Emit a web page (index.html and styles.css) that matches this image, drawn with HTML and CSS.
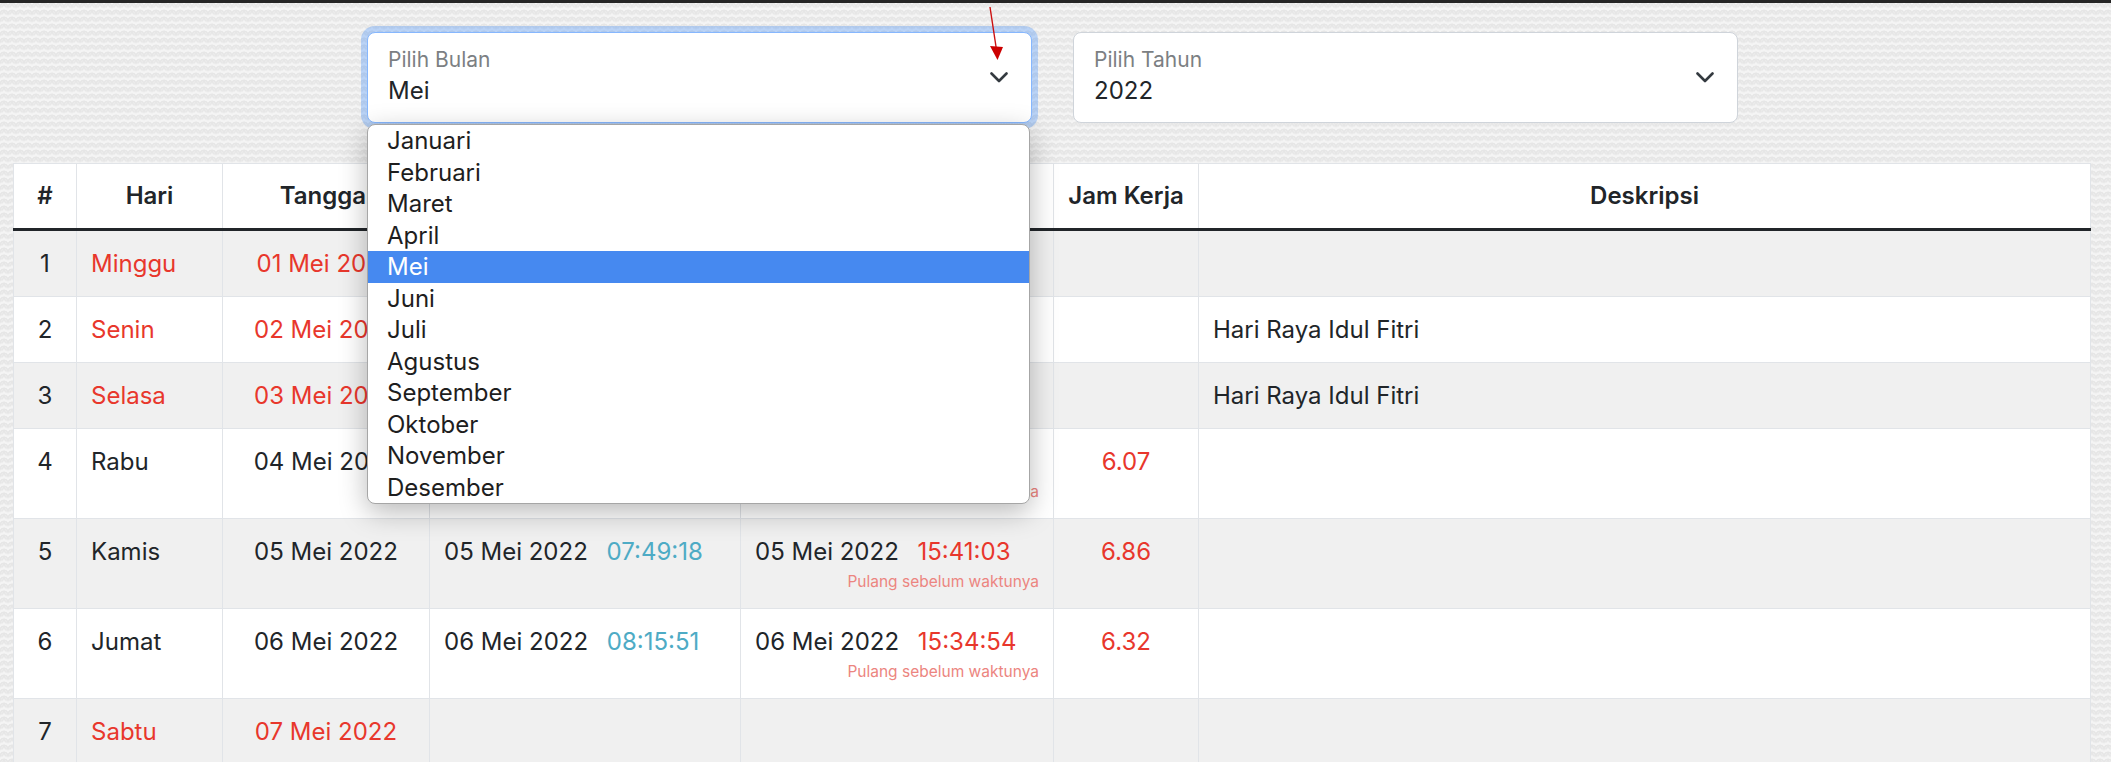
FILE: index.html
```html
<!DOCTYPE html>
<html lang="id">
<head>
<meta charset="utf-8">
<title>Absensi</title>
<link rel="stylesheet" href="styles.css">
</head>
<body>
<div class="topbar"></div>
<div class="filters">
  <div class="select focused">
    <div class="select-text">
      <div class="select-label">Pilih Bulan</div>
      <div class="select-value">Mei</div>
    </div>
    <svg class="chev" width="18" height="11" viewBox="0 0 18 11"><polyline points="1.5,1.5 9,9 16.5,1.5" fill="none" stroke="#343a40" stroke-width="2.6" stroke-linecap="round" stroke-linejoin="round"/></svg>
    <ul class="dropdown">
      <li>Januari</li>
      <li>Februari</li>
      <li>Maret</li>
      <li>April</li>
      <li class="active">Mei</li>
      <li>Juni</li>
      <li>Juli</li>
      <li>Agustus</li>
      <li>September</li>
      <li>Oktober</li>
      <li>November</li>
      <li>Desember</li>
    </ul>
  </div>
  <div class="select">
    <div class="select-text">
      <div class="select-label">Pilih Tahun</div>
      <div class="select-value">2022</div>
    </div>
    <svg class="chev" width="18" height="11" viewBox="0 0 18 11"><polyline points="1.5,1.5 9,9 16.5,1.5" fill="none" stroke="#343a40" stroke-width="2.6" stroke-linecap="round" stroke-linejoin="round"/></svg>
  </div>
</div>

<svg class="annot" width="30" height="66" viewBox="0 0 30 66">
  <line x1="5" y1="7" x2="11.5" y2="50" stroke="#cc1010" stroke-width="1.4"/>
  <polygon points="5,46 18,47 12.5,60" fill="#cc0000"/>
</svg>

<div class="table-wrap">
<table class="absen">
  <colgroup>
    <col class="c-no"><col class="c-hari"><col class="c-tgl"><col class="c-masuk"><col class="c-pulang"><col class="c-jam"><col class="c-desk">
  </colgroup>
  <thead>
    <tr><th>#</th><th>Hari</th><th>Tanggal</th><th>Masuk</th><th>Pulang</th><th>Jam Kerja</th><th>Deskripsi</th></tr>
  </thead>
  <tbody>
    <tr class="odd">
      <td class="center">1</td><td class="red">Minggu</td><td class="center red">01 Mei 2022</td><td></td><td></td><td></td><td></td>
    </tr>
    <tr>
      <td class="center">2</td><td class="red">Senin</td><td class="center red">02 Mei 2022</td><td></td><td></td><td></td><td>Hari Raya Idul Fitri</td>
    </tr>
    <tr class="odd">
      <td class="center">3</td><td class="red">Selasa</td><td class="center red">03 Mei 2022</td><td></td><td></td><td></td><td>Hari Raya Idul Fitri</td>
    </tr>
    <tr>
      <td class="center">4</td><td>Rabu</td><td class="center">04 Mei 2022</td>
      <td>04 Mei 2022 <span class="t-in">07:55:12</span></td>
      <td>04 Mei 2022 <span class="t-out">15:39:27</span><span class="note">Pulang sebelum waktunya</span></td>
      <td class="center red">6.07</td><td></td>
    </tr>
    <tr class="odd">
      <td class="center">5</td><td>Kamis</td><td class="center">05 Mei 2022</td>
      <td>05 Mei 2022 <span class="t-in">07:49:18</span></td>
      <td>05 Mei 2022 <span class="t-out">15:41:03</span><span class="note">Pulang sebelum waktunya</span></td>
      <td class="center red">6.86</td><td></td>
    </tr>
    <tr>
      <td class="center">6</td><td>Jumat</td><td class="center">06 Mei 2022</td>
      <td>06 Mei 2022 <span class="t-in">08:15:51</span></td>
      <td>06 Mei 2022 <span class="t-out">15:34:54</span><span class="note">Pulang sebelum waktunya</span></td>
      <td class="center red">6.32</td><td></td>
    </tr>
    <tr class="odd">
      <td class="center">7</td><td class="red">Sabtu</td><td class="center red">07 Mei 2022</td><td></td><td></td><td></td><td></td>
    </tr>
  </tbody>
</table>
</div>
</body>
</html>
```

FILE: styles.css
```css
html, body {
  margin: 0;
  padding: 0;
}
body {
  font-family: "Inter", "Noto Sans", sans-serif;
  color: #212529;
  background-color: #f4f4f4;
  background-image:
    radial-gradient(circle at 50% 100%, transparent 2.6px, #e6e6e6 3.2px, #e6e6e6 4.2px, transparent 4.8px),
    radial-gradient(circle at 50% 0%, transparent 2.6px, #e6e6e6 3.2px, #e6e6e6 4.2px, transparent 4.8px);
  background-size: 8px 7px;
  background-position: 0 0, 4px 3.5px;
  position: relative;
  min-height: 762px;
}
.topbar {
  height: 3px;
  background: #242424;
}
.filters {
  display: flex;
  gap: 41px;
  padding: 29px 0 0 367px;
}
.select {
  position: relative;
  box-sizing: border-box;
  width: 665px;
  height: 91px;
  background: #fff;
  border: 1px solid #cfd4da;
  border-radius: 8px;
  display: flex;
  align-items: center;
  justify-content: space-between;
  padding: 0 23px 0 20px;
}
.select.focused {
  border-color: #86b7fe;
  box-shadow: 0 0 0 6px rgba(13, 110, 253, 0.25);
  z-index: 5;
}
.select-text {
  align-self: flex-start;
  padding-top: 14px;
}
.select-label {
  font-size: 21px;
  line-height: 26px;
  color: #7c7f83;
}
.select-value {
  font-size: 24px;
  line-height: 36px;
  color: #212529;
}
.chev {
  display: block;
}
.dropdown {
  position: absolute;
  top: calc(100% + 2px);
  left: -1px;
  width: 663px;
  box-sizing: border-box;
  margin: 0;
  padding: 0;
  list-style: none;
  background: #fff;
  border: 1px solid #a6a6a6;
  border-radius: 8px;
  box-shadow: 0 8px 28px rgba(0, 0, 0, 0.28);
  overflow: hidden;
}
.dropdown li {
  font-size: 24px;
  line-height: 31.5px;
  height: 31.5px;
  padding-left: 19px;
  color: #1e1e1e;
}
.dropdown li.active {
  background: #4689f0;
  color: #fff;
}
.annot {
  position: absolute;
  left: 985px;
  top: 0;
  z-index: 10;
}
.table-wrap {
  padding: 40px 20px 0 13px;
}
.absen {
  width: 2078px;
  table-layout: fixed;
  border-collapse: collapse;
  background: #fff;
  font-size: 24px;
}
.c-no { width: 63px; }
.c-hari { width: 146px; }
.c-tgl { width: 207px; }
.c-masuk { width: 311px; }
.c-pulang { width: 313px; }
.c-jam { width: 145px; }
.c-desk { width: auto; }
.absen th {
  font-weight: 600;
  font-size: 24px;
  line-height: 36px;
  padding: 14px 6px 14px;
  text-align: center;
  border: 1px solid #e1e4e8;
  border-bottom: 3px solid #212529;
  white-space: nowrap;
}
.absen td {
  line-height: 36px;
  padding: 15px 14px 14px;
  vertical-align: top;
  border: 1px solid #e1e4e8;
  white-space: nowrap;
}
.absen tr.odd td {
  background: #f0f0f0;
}
.center { text-align: center; }
.red { color: #e8372c; }
.t-in {
  color: #4eabc5;
  margin-left: 12px;
}
.t-out {
  color: #e8372c;
  margin-left: 12px;
}
.note {
  display: block;
  text-align: right;
  font-size: 15.5px;
  line-height: 24px;
  color: #ec8580;
}
```
